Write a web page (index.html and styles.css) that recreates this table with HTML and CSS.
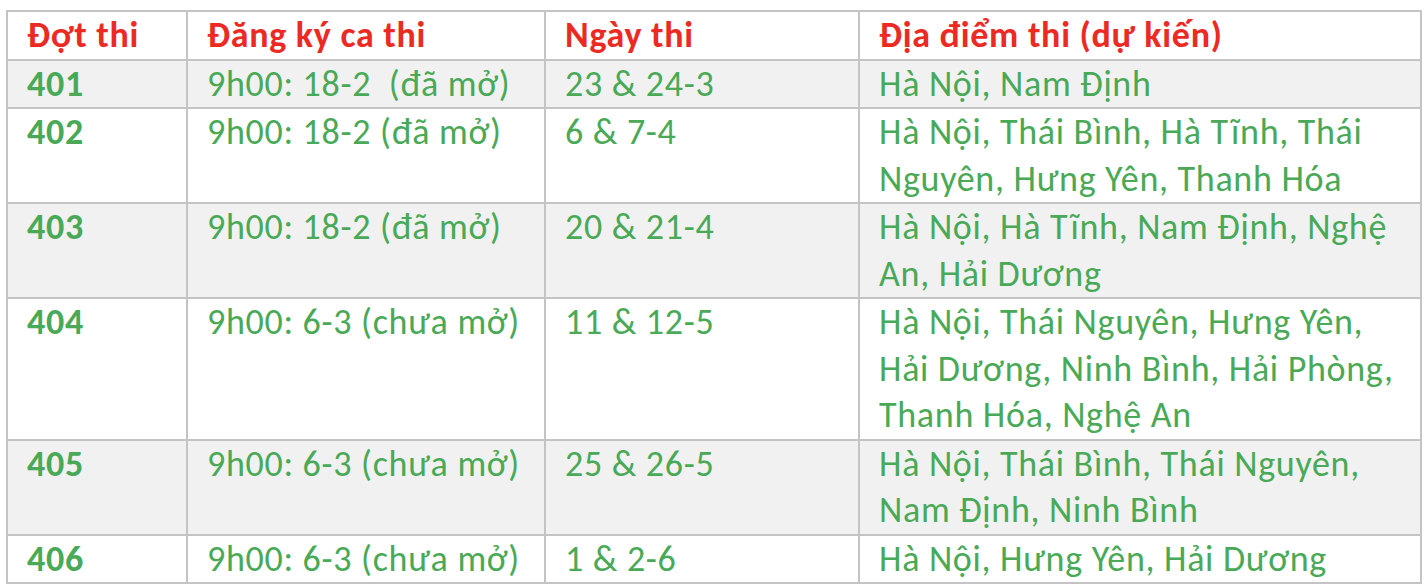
FILE: index.html
```html
<!DOCTYPE html>
<html lang="vi">
<head>
<meta charset="utf-8">
<title>Lịch thi</title>
<link rel="stylesheet" href="styles.css">
</head>
<body>
<table class="schedule">
  <colgroup>
    <col class="c1"><col class="c2"><col class="c3"><col class="c4">
  </colgroup>
  <thead>
    <tr class="head">
      <th>Đợt thi</th>
      <th>Đăng ký ca thi</th>
      <th>Ngày thi</th>
      <th>Địa điểm thi (dự kiến)</th>
    </tr>
  </thead>
  <tbody>
    <tr class="alt">
      <td class="id">401</td>
      <td>9h00: 18-2&nbsp; (đã mở)</td>
      <td>23 &amp; 24-3</td>
      <td>Hà Nội, Nam Định</td>
    </tr>
    <tr>
      <td class="id">402</td>
      <td>9h00: 18-2 (đã mở)</td>
      <td>6 &amp; 7-4</td>
      <td>Hà Nội, Thái Bình, Hà Tĩnh, Thái Nguyên, Hưng Yên, Thanh Hóa</td>
    </tr>
    <tr class="alt">
      <td class="id">403</td>
      <td>9h00: 18-2 (đã mở)</td>
      <td>20 &amp; 21-4</td>
      <td>Hà Nội, Hà Tĩnh, Nam Định, Nghệ An, Hải Dương</td>
    </tr>
    <tr>
      <td class="id">404</td>
      <td>9h00: 6-3 (chưa mở)</td>
      <td>11 &amp; 12-5</td>
      <td>Hà Nội, Thái Nguyên, Hưng Yên, Hải Dương, Ninh Bình, Hải Phòng, Thanh Hóa, Nghệ An</td>
    </tr>
    <tr class="alt">
      <td class="id">405</td>
      <td>9h00: 6-3 (chưa mở)</td>
      <td>25 &amp; 26-5</td>
      <td>Hà Nội, Thái Bình, Thái Nguyên, Nam Định, Ninh Bình</td>
    </tr>
    <tr>
      <td class="id">406</td>
      <td>9h00: 6-3 (chưa mở)</td>
      <td>1 &amp; 2-6</td>
      <td>Hà Nội, Hưng Yên, Hải Dương</td>
    </tr>
  </tbody>
</table>
</body>
</html>
```

FILE: styles.css
```css
html, body {
  margin: 0;
  padding: 0;
  background: #ffffff;
}

body {
  padding: 10px 0 0 6px;
  font-family: Carlito, Lato, "Open Sans", sans-serif;
}

.schedule {
  border-collapse: collapse;
  table-layout: fixed;
  width: 1414px;
  font-size: 36px;
  line-height: 46.5px;
  letter-spacing: 0.7px;
}

.c1 { width: 180px; }
.c2 { width: 358px; }
.c3 { width: 314px; }
.c4 { width: 562px; }

.schedule th,
.schedule td {
  border: 2px solid #c4c4c4;
  padding: 0 19px;
  text-align: left;
  vertical-align: top;
  color: #49a957;
  font-weight: 400;
}

.schedule th {
  color: #ec2a24;
  font-weight: 700;
}

.schedule td.id {
  font-weight: 700;
}

.alt td {
  background: #f1f1f1;
}
```
